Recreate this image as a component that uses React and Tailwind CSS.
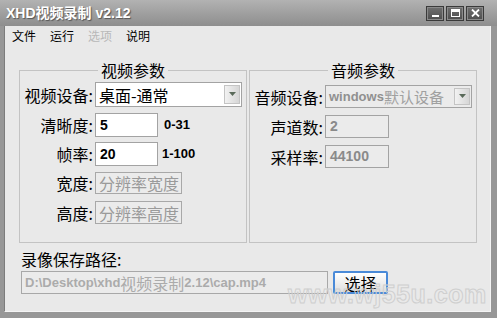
import React from "react";

const cjk = "font-['Noto_Sans_CJK_SC',sans-serif]";
const latin = "font-['Liberation_Sans','Noto_Sans_CJK_SC',sans-serif]";

const Label = ({ children }) => (
  <div className="w-[73px] text-right text-[16px] leading-[18px] text-black">{children}</div>
);

const TextBox = ({ value, width, height, disabled }) => (
  <div
    className={`ml-[2px] flex items-center border border-[#a3a3a3] pl-[4px] ${
      disabled ? "bg-[#ebebeb] text-[#8a8a8a]" : "bg-white text-black"
    } ${latin} text-[14px] font-bold`}
    style={{ width, height }}
  >
    {value}
  </div>
);

const DisabledHint = ({ value, width, height }) => (
  <div
    className="ml-[2px] flex items-center border border-[#a8a8a8] bg-[#ebebeb] pl-[3px] text-[16px] text-[#9a9a9a]"
    style={{ width, height }}
  >
    {value}
  </div>
);

const Combo = ({ children, height, disabled }) => (
  <div
    className={`ml-[2px] flex w-[147px] items-center border border-[#a3a3a3] pl-[3px] pr-[1px] ${
      disabled ? "bg-[#ebebeb]" : "bg-white"
    }`}
    style={{ height }}
  >
    <div className="flex flex-1 items-center whitespace-nowrap text-[16px] leading-[20px]">{children}</div>
    <div className="flex h-[calc(100%-4px)] w-[16px] shrink-0 items-center justify-center border border-[#c4c4c4] bg-gradient-to-r from-[#f2f2f2] to-[#d6d6d6]">
      <svg width="7" height="5" viewBox="0 0 7 5">
        <path d="M0 0h7L3.5 4z" fill="#5a6a5a" />
      </svg>
    </div>
  </div>
);

const WinButton = ({ children }) => (
  <div className="flex h-[15px] w-[18px] items-center justify-center border border-[#3a3a3a] bg-gradient-to-b from-[#707070] to-[#4e4e4e] shadow-[inset_0_0_0_1px_#8a8a8a]">
    {children}
  </div>
);

export default function App() {
  return (
    <div className={`flex h-[318px] w-[497px] flex-col bg-[#979797] ${cjk}`}>
      {/* title bar */}
      <div className="flex h-[26px] shrink-0 items-center justify-between bg-gradient-to-b from-[#b2b2b2] to-[#8e8e8e] pl-[6px] pr-[13px]">
        <span className={`${latin} text-[14px] font-bold text-white [text-shadow:1px_1px_1px_#555]`}>
          XHD<span className={`${cjk} font-bold`}>视频录制</span> v2.12
        </span>
        <div className="flex gap-[2px]">
          <WinButton>
            <div className="mt-[6px] h-[2px] w-[7px] bg-white" />
          </WinButton>
          <WinButton>
            <div className="h-[8px] w-[9px] border border-t-[3px] border-white" />
          </WinButton>
          <WinButton>
            <svg width="9" height="8" viewBox="0 0 9 8">
              <path d="M1 0.5L8 7.5M8 0.5L1 7.5" stroke="#fff" strokeWidth="1.8" />
            </svg>
          </WinButton>
        </div>
      </div>

      {/* client area */}
      <div className="relative mb-[6px] ml-[4px] mr-[6px] flex flex-1 flex-col border-l border-r border-b border-l-[#7c7c7c] border-r-[#f4f4f4] border-b-[#f4f4f4] bg-[#e9e9e9]">
        {/* menu */}
        <div className="flex h-[20px] items-center gap-[14px] pl-[7px] text-[12px] leading-[20px] text-black">
          <span>文件</span>
          <span>运行</span>
          <span className="text-[#b8b8b8]">选项</span>
          <span>说明</span>
        </div>

        {/* groups */}
        <div className="mt-[15px] flex gap-[2px] pl-[14px]">
          <fieldset className="h-[182px] w-[228px] border border-[#c3c3c3]">
            <legend className="mx-auto px-[3px] text-[16px] leading-[18px]">视频参数</legend>
            <div className="mt-[3px] flex items-center">
              <Label>视频设备:</Label>
              <Combo height={25}>桌面-通常</Combo>
            </div>
            <div className="mt-[6px] flex items-center">
              <Label>清晰度:</Label>
              <TextBox value="5" width={63} height={24} />
              <span className={`ml-[6px] ${latin} text-[13px] font-bold`}>0-31</span>
            </div>
            <div className="mt-[5px] flex items-center">
              <Label>帧率:</Label>
              <TextBox value="20" width={63} height={24} />
              <span className={`ml-[4px] ${latin} text-[13px] font-bold`}>1-100</span>
            </div>
            <div className="mt-[6px] flex items-center">
              <Label>宽度:</Label>
              <DisabledHint value="分辨率宽度" width={87} height={22} />
            </div>
            <div className="mt-[7px] flex items-center">
              <Label>高度:</Label>
              <DisabledHint value="分辨率高度" width={87} height={23} />
            </div>
          </fieldset>

          <fieldset className="h-[182px] w-[228px] border border-[#c3c3c3]">
            <legend className="mx-auto px-[3px] text-[16px] leading-[18px]">音频参数</legend>
            <div className="mt-[6px] flex items-center">
              <Label>音频设备:</Label>
              <Combo height={23} disabled>
                <span className={`${latin} text-[13px] font-bold text-[#909090]`}>windows</span>
                <span className="text-[15px] text-[#a0a0a0]">默认设备</span>
              </Combo>
            </div>
            <div className="mt-[7px] flex items-center">
              <Label>声道数:</Label>
              <TextBox value="2" width={64} height={23} disabled />
            </div>
            <div className="mt-[7px] flex items-center">
              <Label>采样率:</Label>
              <TextBox value="44100" width={64} height={23} disabled />
            </div>
          </fieldset>
        </div>

        {/* save path */}
        <div className="mt-[7px] pl-[16px] text-[16px] leading-[18px]">录像保存路径:</div>
        <div className="mt-[3px] flex items-center gap-[5px] pl-[16px]">
          <div className="flex h-[23px] w-[307px] items-center whitespace-nowrap border border-[#a8a8a8] bg-[#ebebeb] pl-[3px] text-[#ababab]">
            <span className={`${latin} text-[13px] font-bold`}>D:\Desktop\xhd</span>
            <span className="text-[16px]">视频录制</span>
            <span className={`${latin} text-[13px] font-bold`}>2.12\cap.mp4</span>
          </div>
          <button className="flex h-[23px] w-[55px] items-center justify-center rounded-[2px] border-2 border-[#4a8ad8] bg-gradient-to-b from-[#ffffff] to-[#dedede] text-[16px] leading-[18px] text-black">
            选择
          </button>
        </div>

        {/* watermark */}
        <div
          className={`pointer-events-none absolute left-[283px] top-[250px] ${latin} text-[25px] font-bold tracking-[0.5px] text-transparent [-webkit-text-stroke:1px_#cfcfcf]`}
        >
          www.wj55u.com
        </div>
      </div>
    </div>
  );
}
